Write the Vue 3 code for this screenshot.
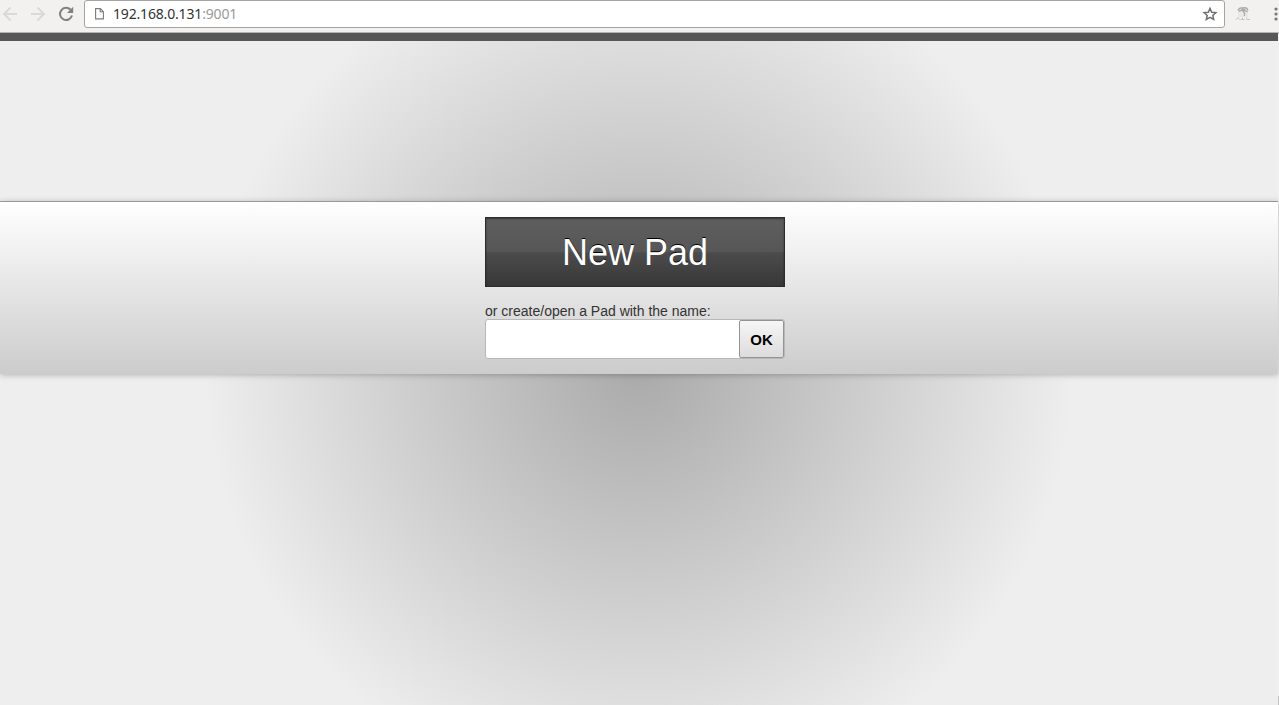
<script setup>
const host = '192.168.0.131'
const port = ':9001'
</script>

<template>
  <div class="window">
    <header class="toolbar">
      <nav class="nav">
        <svg class="arrow" width="16" height="16" viewBox="0 0 16 16"><path d="M15 8H2.500M8.500 1.500L2 8l6.500 6.500" /></svg>
        <svg class="arrow" width="16" height="16" viewBox="0 0 16 16"><path d="M1 8h12.500M7.500 1.500L14 8l-6.500 6.500" /></svg>
        <svg class="reload" width="16" height="16" viewBox="0 0 16 16">
          <path class="ring" d="M12.600 3.800A6.100 6.100 0 1 0 14 9.600" />
          <path class="tip" d="M15.200 0.800V7H9z" />
        </svg>
      </nav>
      <div class="address">
        <svg class="page" width="9" height="12" viewBox="0 0 9 12"><path d="M.6.6h4.700L8.400 3.700V10.900H.6zM5.200.6v3.200h3.200" /></svg>
        <span class="url">{{ host }}<span class="port">{{ port }}</span></span>
        <svg class="star" width="16" height="16" viewBox="0 0 16 16"><path d="M8 2.400l1.700 3.800 4.200.4-3.100 2.800.9 4.100L8 11.400l-3.700 2.100.9-4.100-3.100-2.800 4.200-.4z" /></svg>
      </div>
      <svg class="extension" width="16" height="16" viewBox="0 0 16 16">
        <rect x="3" y="1" width="10" height="10" fill="#e8e8e8" />
        <path d="M3 4.500C4 2 6 1.500 8 2c2-1 4 0 5 2.500M4 5.500c2-2 3-1 4-.5 2-1 3-.500 4.500 1M6.500 3.500h4M8 5l1.500 2v3" fill="none" stroke="#aaa" stroke-width="1.300" />
        <path d="M1 13.500l2-2 1.500 2M5.500 13.500h4M7.500 11.500v2M11 11.500l1 2h3" fill="none" stroke="#c4c4c4" />
      </svg>
      <svg class="menu" width="6" height="14" viewBox="0 0 6 14">
        <circle cx="3" cy="2" r="1.600" /><circle cx="3" cy="7" r="1.600" /><circle cx="3" cy="12" r="1.600" />
      </svg>
    </header>
    <main class="site">
      <section class="wrapper">
        <div class="inner">
          <button class="new-pad">New Pad</button>
          <label class="label" for="padname">or create/open a Pad with the name:</label>
          <form class="open-form" @submit.prevent>
            <input id="padname" class="name" type="text" autocomplete="off">
            <button class="ok" type="submit">OK</button>
          </form>
        </div>
      </section>
      <i class="corner"></i>
    </main>
  </div>
</template>

<style>
body { margin: 0; overflow: hidden; }
</style>

<style scoped>
.window { display: flex; flex-direction: column; width: 1279px; height: 705px; overflow: hidden; background: #f2f1f0; }
.toolbar { box-sizing: border-box; flex: none; display: flex; height: 33px; border-bottom: 1px solid #b6b4b2; background: #f2f1f0; }
.nav { display: flex; gap: 12px; width: 82px; height: 28px; align-items: center; margin-left: 2px; }
.arrow { fill: none; stroke: #dad9d8; stroke-width: 2; }
.ring { fill: none; stroke: #808080; stroke-width: 2; }
.tip { fill: #808080; }
.address { box-sizing: border-box; flex: none; display: flex; align-items: center; width: 1141px; height: 28px; padding: 0 6px 0 10px; border: 1px solid #a6a4a2; border-radius: 3px; background: #fff; }
.page { fill: none; stroke: #7c7c7c; stroke-width: 1.100; }
.url { flex: 1; margin-left: 9px; color: #333; font: 14px/20px "Noto Sans", "Open Sans", sans-serif; letter-spacing: -.17px; }
.port { color: #999; }
.star { fill: none; stroke: #707070; stroke-width: 1.500; }
.extension { flex: none; margin: 6px 0 0 10px; }
.menu { margin: 7px 0 0 22px; fill: #777; flex: none; }
.site { box-sizing: border-box; position: relative; flex: 1; width: 1278px; padding-top: 160px; border-top: 8px solid #575757; background: radial-gradient(circle 434px at 639px 328px, #aaa, #eee); }
.wrapper { box-sizing: border-box; height: 173px; padding: 15px 23px 14px 15px; border-top: 1px solid #999; background: linear-gradient(#fff, #ccc); box-shadow: 0 1px 6px rgba(0, 0, 0, .25); }
.inner { width: 300px; margin: 0 auto; font-family: "Liberation Sans", Arial, sans-serif; }
.new-pad { display: block; box-sizing: border-box; width: 300px; height: 70px; padding: 1px 0 0; border: 1px solid #2c2c2c; color: #fff; font: 36px/68px "Liberation Sans", Arial, sans-serif; text-align: center; text-shadow: 0 -1px 0 #000; background: linear-gradient(#5f5f5f, #565656 50%, #4c4c4c 51%, #373737); box-shadow: inset 0 1px 2px rgba(0, 0, 0, .45); }
.label { display: block; margin-top: 16px; height: 16px; color: #333; font-size: 14px; line-height: 16px; white-space: nowrap; }
.open-form { box-sizing: border-box; display: flex; width: 300px; height: 40px; border: 1px solid #b8b8b8; border-radius: 3px; background: #fff; }
.name { flex: 1; min-width: 0; border: 0; padding: 0 8px; outline: 0; background: transparent; font-size: 14px; }
.ok { box-sizing: border-box; width: 45px; height: 38px; padding: 0; border: 1px solid #949494; border-radius: 2px; color: #000; font: bold 15px "Liberation Sans", Arial, sans-serif; background: linear-gradient(#f6f6f6, #dcdcdc); }
.corner { position: absolute; right: -1px; bottom: 0; width: 1px; height: 9px; background: #c4c4c4; }
</style>
